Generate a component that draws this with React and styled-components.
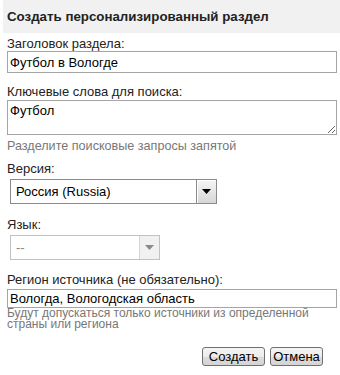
import React from "react";
import styled, { createGlobalStyle } from "styled-components";

const GlobalStyle = createGlobalStyle`
    html, body {
        margin: 0;
        padding: 0;
        background: #ffffff;
    }
    body {
        font-family: "Liberation Sans", Arial, sans-serif;
        font-size: 13px;
        color: #222222;
    }
`;

export default function App() {
    return (
        <>
            <GlobalStyle />
            <Panel>
                <Header>Создать персонализированный раздел</Header>
                <Form>
                    <Field top={3}>
                        <Label>Заголовок раздела:</Label>
                        <TextInput defaultValue="Футбол в Вологде" />
                    </Field>

                    <Field top={11}>
                        <Label>Ключевые слова для поиска:</Label>
                        <TextArea defaultValue="Футбол" />
                        <Hint>Разделите поисковые запросы запятой</Hint>
                    </Field>

                    <Field top={8}>
                        <Label>Версия:</Label>
                        <Select width={207}>
                            <SelectValue>Россия (Russia)</SelectValue>
                            <ArrowBox>
                                <Arrow />
                            </ArrowBox>
                        </Select>
                    </Field>

                    <Field top={13}>
                        <Label>Язык:</Label>
                        <Select width={150} disabled>
                            <SelectValue disabled>--</SelectValue>
                            <ArrowBox disabled>
                                <Arrow disabled />
                            </ArrowBox>
                        </Select>
                    </Field>

                    <Field top={12}>
                        <Label>Регион источника (не обязательно):</Label>
                        <TextInput small defaultValue="Вологда, Вологодская область" />
                        <Hint tight>
                            Будут допускаться только источники из определенной
                            страны или региона
                        </Hint>
                    </Field>

                    <Buttons>
                        <Button width={63}>Создать</Button>
                        <Button width={53}>Отмена</Button>
                    </Buttons>
                </Form>
            </Panel>
        </>
    );
}

function Arrow({ disabled }) {
    return (
        <svg width="9" height="5" viewBox="0 0 9 5">
            <path d="M0 0 H9 L4.5 5 Z" fill={disabled ? "#8a8a8a" : "#000"} />
        </svg>
    );
}

const Panel = styled.div`
    width: 340px;
    height: 375px;
    box-sizing: border-box;
`;

const Header = styled.div`
    margin-left: 3px;
    height: 33px;
    line-height: 33px;
    padding-left: 4px;
    background: #f1f1f1;
    font-weight: bold;
    font-size: 13.3px;
    color: #222222;
`;

const Form = styled.div`
    display: flex;
    flex-direction: column;
    padding: 0 3px 0 7px;
`;

const Field = styled.div`
    display: flex;
    flex-direction: column;
    align-items: flex-start;
    margin-top: ${(props) => props.top}px;
`;

const Label = styled.label`
    display: block;
    line-height: 15px;
    font-size: 13px;
    color: #222222;
`;

const TextInput = styled.input`
    box-sizing: border-box;
    width: 330px;
    height: ${(props) => (props.small ? 19 : 22)}px;
    margin: ${(props) => (props.small ? 2 : 0)}px 0 0 0;
    padding: 0 2px;
    border: 1px solid #a5a5a5;
    font-family: "Liberation Sans", Arial, sans-serif;
    font-size: 13px;
    color: #000000;
    outline: none;
`;

const TextArea = styled.textarea`
    box-sizing: border-box;
    width: 330px;
    height: 35px;
    margin: 1px 0 0 0;
    padding: 2px 2px;
    border: 1px solid #a5a5a5;
    font-family: "Liberation Sans", Arial, sans-serif;
    font-size: 13px;
    color: #000000;
    resize: vertical;
    outline: none;
`;

const Hint = styled.div`
    margin-top: ${(props) => (props.tight ? 0 : 4)}px;
    line-height: ${(props) => (props.tight ? 11 : 14)}px;
    font-size: ${(props) => (props.tight ? 12 : 12.6)}px;
    color: #777777;
`;

const Select = styled.div`
    box-sizing: border-box;
    display: flex;
    align-items: stretch;
    width: ${(props) => props.width}px;
    height: 25px;
    margin: 3px 0 0 3px;
    border: 1px solid ${(props) => (props.disabled ? "#c2c2c2" : "#8a8a8a")};
    background: #ffffff;
`;

const SelectValue = styled.div`
    flex: 1;
    display: flex;
    align-items: center;
    padding-left: 5px;
    font-size: 13px;
    color: ${(props) => (props.disabled ? "#888888" : "#000000")};
`;

const ArrowBox = styled.div`
    box-sizing: border-box;
    width: 20px;
    display: flex;
    align-items: center;
    justify-content: center;
    border-left: 1px solid ${(props) => (props.disabled ? "#d4d4d4" : "#8a8a8a")};
    background: ${(props) =>
        props.disabled
            ? "#f1f1f1"
            : "linear-gradient(#f6f6f6, #d6d6d6)"};
    box-shadow: ${(props) =>
        props.disabled ? "none" : "inset 1px 1px 0 #ffffff"};
`;

const Buttons = styled.div`
    display: flex;
    justify-content: flex-end;
    gap: 5px;
    margin-top: 17px;
    padding-right: 14px;
`;

const Button = styled.button`
    box-sizing: border-box;
    width: ${(props) => props.width}px;
    height: 19px;
    padding: 0;
    margin: 0;
    border: 1px solid #707070;
    border-radius: 3px;
    background: linear-gradient(#f4f4f4 0%, #ececec 50%, #dcdcdc 51%, #d4d4d4 100%);
    font-family: "Liberation Sans", Arial, sans-serif;
    font-size: 13px;
    color: #000000;
    line-height: 17px;
`;
